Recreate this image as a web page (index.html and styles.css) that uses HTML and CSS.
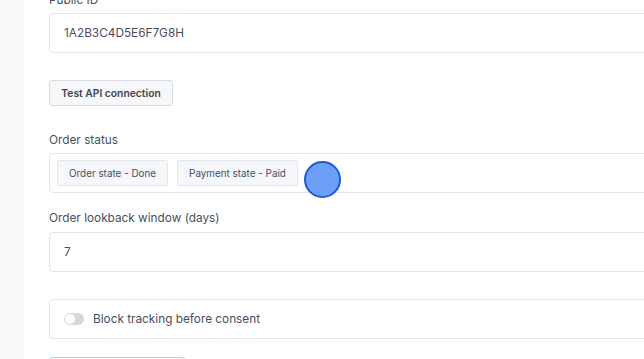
FILE: index.html
```html
<!DOCTYPE html>
<html>
<head>
<meta charset="utf-8">
<link rel="stylesheet" href="styles.css">
</head>
<body>
<div class="page">
  <aside class="sidebar"></aside>
  <main class="main">
    <div class="form">
      <div class="field">
        <label class="label">Public ID</label>
        <div class="input">1A2B3C4D5E6F7G8H</div>
      </div>
      <button class="btn">Test API connection</button>
      <div class="field field-status">
        <label class="label">Order status</label>
        <div class="input chips">
          <span class="chip">Order state - Done</span>
          <span class="chip">Payment state - Paid</span>
          <span class="cursor"></span>
        </div>
      </div>
      <div class="field field-lookback">
        <label class="label">Order lookback window (days)</label>
        <div class="input">7</div>
      </div>
      <div class="input toggle-row">
        <span class="toggle"><span class="knob"></span></span>
        <span class="toggle-text">Block tracking before consent</span>
      </div>
      <div class="next-btn"></div>
    </div>
  </main>
</div>
</body>
</html>
```
FILE: styles.css
```css
html, body {
  margin: 0;
  padding: 0;
  width: 644px;
  height: 359px;
  overflow: hidden;
  background: #ffffff;
  font-family: Inter, "Noto Sans", sans-serif;
  color: #474f5c;
}
.page {
  display: flex;
  height: 359px;
  overflow: hidden;
}
.sidebar {
  width: 24px;
  flex: none;
  background: #f7f8fa;
}
.main {
  flex: none;
  width: 620px;
  padding-left: 25px;
  box-sizing: border-box;
  overflow: hidden;
}
.form {
  display: flex;
  flex-direction: column;
  margin-top: -8px;
  margin-right: -20px;
}
.field {
  display: flex;
  flex-direction: column;
  gap: 4px;
}
.label {
  font-size: 11.8px;
  line-height: 17px;
  color: #474f5c;
}
.input {
  box-sizing: border-box;
  height: 40px;
  border: 1px solid #e3e5e8;
  border-radius: 4px;
  background: #fff;
  display: flex;
  align-items: center;
  padding-left: 14px;
  font-size: 11.8px;
  color: #474f5c;
}
.btn {
  align-self: flex-start;
  margin-top: 27px;
  box-sizing: border-box;
  width: 124px;
  height: 26px;
  border: 1px solid #d6dae0;
  border-radius: 3px;
  background: #f6f7f9;
  font-family: Inter, "Noto Sans", sans-serif;
  font-size: 10.3px;
  font-weight: 600;
  color: #3f4651;
  padding: 0;
}
.field-status {
  margin-top: 26px;
}
.chips {
  padding-left: 7px;
  gap: 9px;
}
.chip {
  box-sizing: border-box;
  height: 26px;
  display: flex;
  align-items: center;
  padding: 0 11px;
  white-space: nowrap;
  border: 1px solid #e3e6ea;
  border-radius: 2px;
  background: #f5f7fa;
  font-size: 9.9px;
  color: #474f5c;
}
.cursor {
  flex: none;
  box-sizing: border-box;
  width: 37px;
  height: 37px;
  margin-left: -3px;
  margin-top: 13px;
  border-radius: 50%;
  background: #6b9ff8;
  border: 2px solid #1d5bcf;
}
.field-lookback {
  margin-top: 17px;
}
.field-lookback .label {
  margin-bottom: 1px;
}
.toggle-row {
  margin-top: 27px;
  gap: 9px;
}
.toggle {
  width: 20px;
  height: 12px;
  border-radius: 6px;
  background: #d5d9df;
  display: flex;
  align-items: center;
  padding-left: 1px;
  box-sizing: border-box;
}
.knob {
  width: 10px;
  height: 10px;
  border-radius: 50%;
  background: #fff;
}
.toggle-text {
  font-size: 11.8px;
  color: #474f5c;
}
.next-btn {
  margin-top: 18px;
  width: 136px;
  height: 26px;
  box-sizing: border-box;
  border: 1px solid #a9d3e6;
  border-radius: 3px;
}
```
